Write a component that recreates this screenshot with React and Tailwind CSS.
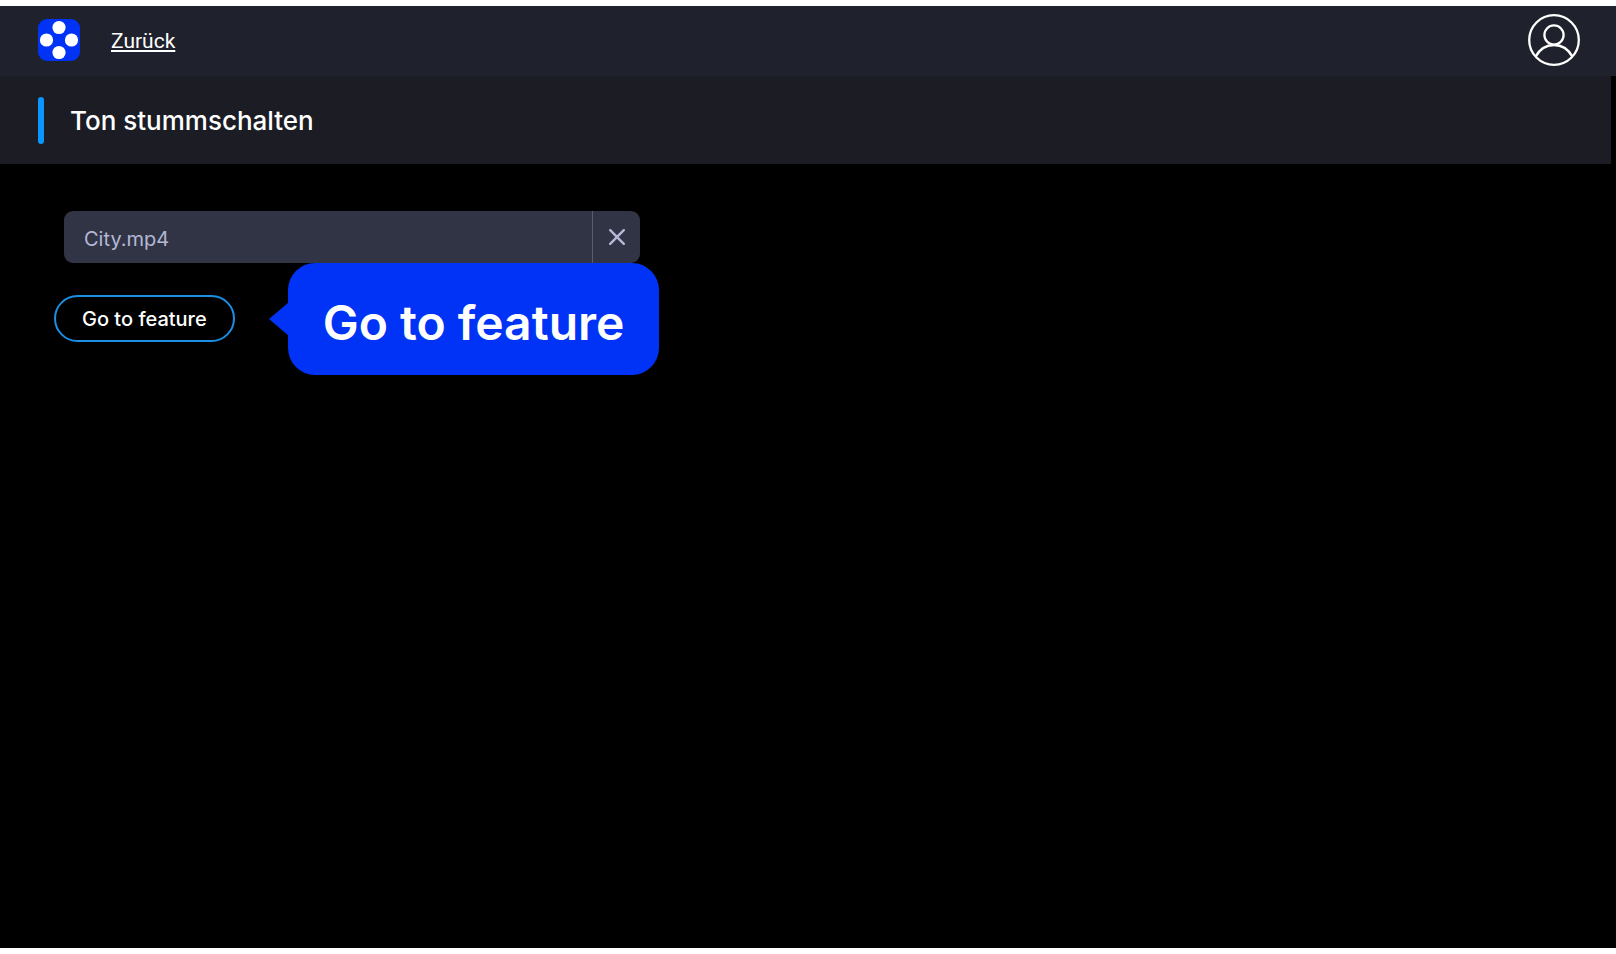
import { useState } from 'react';

const Logo = () => (
  <svg viewBox="0 0 42 42" className="h-[42px] w-[42px]" aria-hidden="true">
    <rect width="42" height="42" rx="9" fill="#0033f5" />
    <g fill="#fff">
      <circle cx="21" cy="8.5" r="6.6" />
      <circle cx="8.5" cy="21" r="6.6" />
      <circle cx="33.5" cy="21" r="6.6" />
      <circle cx="21" cy="33.5" r="6.6" />
    </g>
  </svg>
);

const UserIcon = () => (
  <svg viewBox="0 0 52 52" className="h-[52px] w-[52px]" fill="none" stroke="#fff" strokeWidth="2.3" aria-hidden="true">
    <circle cx="26" cy="26" r="24.8" />
    <circle cx="26" cy="21" r="9.6" />
    <path d="M7.6 42.6C11.6 35.4 18.2 31 26 31s14.4 4.4 18.4 11.6" />
  </svg>
);

const Header = () => (
  <header className="flex h-[70px] items-center bg-[#1f212c] pr-9 pb-0.5 pl-[38px]">
    <Logo />
    <a href="#" className="ml-[31px] pt-0.5 font-[Roboto,sans-serif] text-[21px] leading-6 text-white underline underline-offset-2">
      Zurück
    </a>
    <button type="button" aria-label="Profil" className="ml-auto">
      <UserIcon />
    </button>
  </header>
);

const FileField = ({ value, onChange }) => (
  <div className="ml-2.5 flex h-[52px] w-full max-w-[576px] overflow-hidden rounded-[9px] bg-[#313444] text-[#b4b8d6]">
    <input
      type="text"
      aria-label="Datei"
      value={value}
      onChange={(e) => onChange(e.target.value)}
      className="min-w-0 flex-1 px-5 pt-1 text-xl outline-none"
    />
    <button
      type="button"
      aria-label="Datei entfernen"
      onClick={() => onChange('')}
      className="flex w-12 items-center justify-center border-l border-[#5a5d70]"
    >
      <svg viewBox="0 0 16 16" className="h-4 w-4" fill="none" stroke="currentColor" strokeWidth="2.4" strokeLinecap="round" aria-hidden="true">
        <path d="M1.2 1.2l13.6 13.6M14.8 1.2L1.2 14.8" />
      </svg>
    </button>
  </div>
);

const Callout = ({ children }) => (
  <div className="absolute -top-8 left-full ml-[34px] flex items-center">
    <svg viewBox="0 0 20 34" className="h-[34px] w-5 shrink-0" aria-hidden="true">
      <path d="M0 17L20 0v34z" fill="#0033f5" />
    </svg>
    <div className="-ml-px rounded-[27px] bg-[#0033f5] px-[35px] pt-8 pb-6 text-5xl leading-[56px] font-semibold whitespace-nowrap text-white">
      {children}
    </div>
  </div>
);

export default function App() {
  const [file, setFile] = useState('City.mp4');

  return (
    <div className="flex min-h-screen flex-col bg-white py-1.5 font-[Inter,sans-serif]">
      <Header />
      <main className="flex-1 bg-black">
        <div className="mr-[5px] flex h-[88px] items-center bg-[#1b1c24] pl-[38px]">
          <span className="h-[47px] w-1.5 rounded-full bg-[#0a95ff]" />
          <h1 className="ml-[26px] pt-0.5 text-[26px] leading-8 font-medium text-white">Ton stummschalten</h1>
        </div>

        <section className="px-[54px] pt-[47px]">
          <FileField value={file} onChange={setFile} />
          <div className="relative mt-8 w-fit">
            <button
              type="button"
              className="h-[47px] rounded-full border-2 border-[#1a8fe3] px-[26px] text-xl leading-6 font-medium text-white"
            >
              Go to feature
            </button>
            <Callout>Go to feature</Callout>
          </div>
        </section>
      </main>
    </div>
  );
}
